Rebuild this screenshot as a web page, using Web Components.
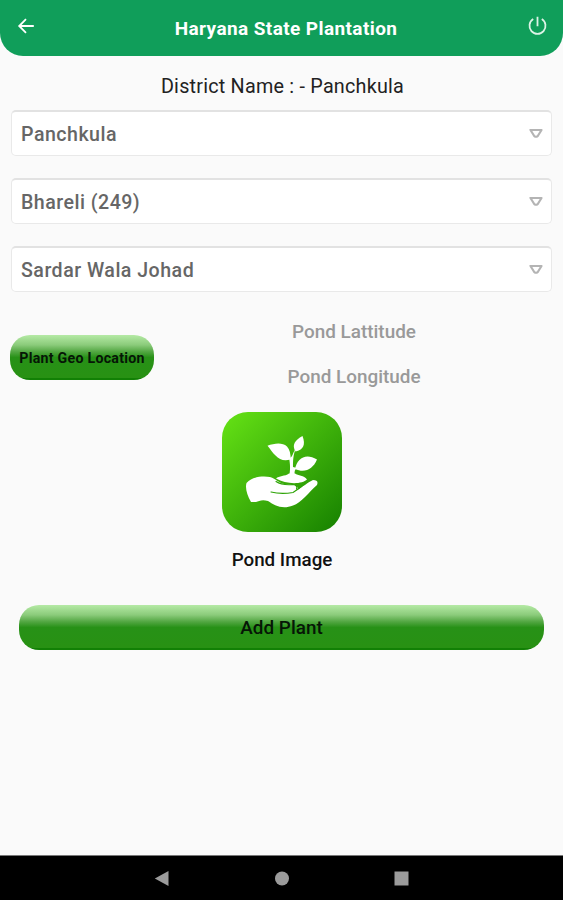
<!DOCTYPE html>
<html lang="en">
<head>
<meta charset="utf-8">
<title>Haryana State Plantation</title>
<style>
html,body{margin:0;height:100%;background:#fafafa;font-family:Roboto,"Liberation Sans",sans-serif}
</style>
</head>
<body>
<plant-app></plant-app>
<script>
const define = (name, html) => {
  const t = document.createElement('template');
  t.innerHTML = html;
  customElements.define(name, class extends HTMLElement {
    constructor() {
      super();
      this.attachShadow({mode: 'open'}).append(t.content.cloneNode(true));
    }
  });
};

define('app-header', `<style>
:host{display:flex;box-sizing:border-box;height:56px;padding:0 16px;background:#109e5a;color:#fff;border-radius:0 0 23px 23px;justify-content:space-between}
svg{display:block;width:20px;height:20px;margin-top:16px;fill:none;stroke:#fff;stroke-width:1.8}
.power{stroke:#dcf3e6}
h1{margin:0;padding:17px 0 0 9px;font-size:19px;line-height:24px;font-weight:700;letter-spacing:.4px;white-space:nowrap}
</style>
<svg viewBox="0 0 20 20"><path d="M17.8 10H3.5M10 3.2 3.2 10 10 16.8"/></svg>
<h1><slot></slot></h1>
<svg class="power" viewBox="0 0 20 20"><path d="M10.500 .8v9.4M6.2 3.1a8 8 0 1 0 8.600 0"/></svg>`);

define('select-field', `<style>
:host{display:flex;box-sizing:border-box;height:46px;align-items:center;justify-content:space-between;padding:1px 9px 0 9px;background:#fff;border:1px solid #e9e9e9;border-top:2px solid #e2e2e2;border-radius:5px;color:#666;font-size:19.6px;font-weight:500;letter-spacing:.48px}
svg{display:block;width:14px;height:10px;fill:none;stroke:#b4b4b4;stroke-width:2;stroke-linejoin:round;margin-right:-1px;margin-top:-2px}
</style>
<span><slot></slot></span>
<svg viewBox="0 0 14 10"><path d="M1.4 1.9h11.200L8.7 8.1Q7 9.4 5.3 8.1Z"/></svg>`);

define('gloss-button', `<style>
:host{display:flex;box-sizing:border-box;height:46px;align-items:center;justify-content:center;border-radius:20px;color:#061606;white-space:nowrap;
background:linear-gradient(#b5eaa5 0,#8bcb7b 22%,#53a743 37%,#279117 50%,#289113 95%,#128005 96%)}
</style><slot></slot>`);

define('pond-picture', `<style>
:host{display:flex;flex-direction:column;align-items:center}
svg{display:block;width:120px;height:120px}
span{margin:16px 0 0 1px;font-size:18.800px;line-height:24px;font-weight:500;color:#111}
</style>
<svg viewBox="0 0 120 120">
<defs><linearGradient id="g" x1="0" y1="0" x2="1" y2="1"><stop offset="0" stop-color="#66e315"/><stop offset="1" stop-color="#168000"/></linearGradient></defs>
<rect width="120" height="120" rx="26" fill="url(#g)"/>
<g fill="#fff">
<path d="M45.500 33.800C52 31.500 60 30 65 34.500Q69 39 68.500 47.500C57 51 52 42 45.500 33.800Z"/>
<path d="M80.500 24C84 33 81 38 73.500 39.500C69.500 33 73 28 80.500 24Z"/>
<path d="M95 47.500C91 57 83 61.500 73 57C75 46 84 40.500 95 47.500Z"/>
<path d="M74 36C71 43 71 49 71 55L75 56C72 58 72.500 61 72.800 64H67.200C69 55 67.500 49 67 45C70.500 47 70.500 41 74 36Z"/>
<path d="M54 66.500C57 63.500 63 64.500 67 61.500H73C76 64 82 63 85 67.500C80 72.500 64 72.500 54 66.500Z"/>
<path d="M24.500 71C31 64 42 64 48 65C54 67 57 71 62 72L73 73Q77 75 75 78C81 75 86 70 91 68Q97 68 95 73C87 80 79 91 71 93.500C60 98 52 93 46 89C40 87 37 89 34 90L29 90C25 83 23 76 24.500 71Z"/>
</g>
<g fill="none" stroke="#2da306" stroke-width="1.100" stroke-linecap="round"><path d="M49 80Q59 82.500 71 80.500Q77 77 83 71"/><path d="M54 69.500Q60 73.500 71 72.500Q76 73.500 74.500 77"/></g>
</svg>
<span><slot></slot></span>`);

define('nav-bar', `<style>
:host{display:flex;box-sizing:border-box;height:45px;border-top:1px solid #777;background:#000;align-items:center;justify-content:center;gap:105px}
svg{display:block;width:15px;height:15px;fill:#9b9b9b;margin-top:1px}
</style>
<svg viewBox="0 0 15 15"><path d="M.8 7.500 14.500 0v15Z"/></svg>
<svg viewBox="0 0 15 15"><circle cx="8" cy="7.500" r="7"/></svg>
<svg viewBox="0 0 15 15"><path d="M.5 .5h14v14H.5Z"/></svg>`);

define('plant-app', `<style>
:host{display:flex;flex-direction:column;height:900px;width:563px}
h2{margin:19px 0 0 2px;line-height:24px;height:24px;font-size:19.800px;font-weight:400;color:#222;text-align:center;letter-spacing:.22px}
.fields{display:flex;flex-direction:column;gap:22px;margin:11px 11px 0}
.geo{display:flex;margin:28px 10px 0;justify-content:flex-start;align-items:flex-start}
.geo gloss-button{width:144px;margin-top:15px;height:45px;font-size:14.200px;font-weight:700;letter-spacing:.25px}
.coords{width:264px;margin-left:68px;display:flex;flex-direction:column;gap:21px;text-align:center;line-height:24px;font-size:18.900px;font-weight:500;color:#999}
pond-picture{margin-top:22.500px}
.add{margin:33.500px 19px 0;height:45px;font-size:18.900px;font-weight:500}
nav-bar{margin-top:auto}
</style>
<app-header>Haryana State Plantation</app-header>
<h2>District Name : - Panchkula</h2>
<div class="fields">
<select-field>Panchkula</select-field>
<select-field>Bhareli (249)</select-field>
<select-field>Sardar Wala Johad</select-field>
</div>
<div class="geo"><gloss-button>Plant Geo Location</gloss-button>
<div class="coords"><div>Pond Lattitude</div><div>Pond Longitude</div></div></div>
<pond-picture>Pond Image</pond-picture>
<gloss-button class="add">Add Plant</gloss-button>
<nav-bar></nav-bar>`);
</script>
</body>
</html>
